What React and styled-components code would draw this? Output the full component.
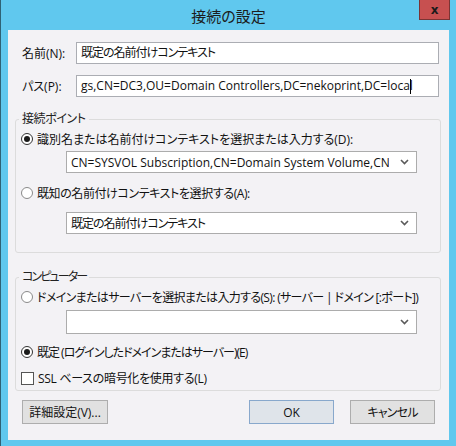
import React from "react";
import styled, { createGlobalStyle } from "styled-components";

const GlobalStyle = createGlobalStyle`
  html, body {
    margin: 0;
    padding: 0;
    background: #60c8ee;
  }
  body {
    font-family: "Open Sans", "Noto Sans CJK JP", sans-serif;
    font-size: 12px;
    color: #111;
    font-feature-settings: "palt";
  }
`;

const Window = styled.div`
  width: 456px;
  height: 446px;
  box-sizing: border-box;
  background: #60c8ee;
  border-left: 1px solid #2f6275;
  padding: 0 7px 6px 7px;
  display: flex;
  flex-direction: column;
`;

const TitleBar = styled.div`
  height: 30px;
  display: grid;
  grid-template-columns: 1fr auto 1fr;
  align-items: center;
`;

const Title = styled.div`
  grid-column: 2;
  font-size: 15px;
  color: #1c1c1c;
`;

const CloseButton = styled.div`
  grid-column: 3;
  justify-self: end;
  align-self: start;
  width: 31px;
  height: 20px;
  margin-right: -1px;
  box-sizing: border-box;
  background: #c75050;
  border: 1px solid #7a3434;
  border-top: none;
  display: flex;
  align-items: center;
  justify-content: center;
  font: bold 12px "DejaVu Sans", sans-serif;
  color: #1a1a1a;
`;

const Client = styled.div`
  flex: 1;
  background: #f3f2f5;
  padding: 12px 8px 0 7px;
  display: flex;
  flex-direction: column;
`;

const FieldRow = styled.div`
  display: grid;
  grid-template-columns: 54px 1fr;
  align-items: center;
  padding: 0 2px 0 7px;
  margin-top: ${(p) => p.$gap || 0}px;
`;

const TextBox = styled.div`
  height: 22px;
  box-sizing: border-box;
  border: 1px solid #abadb3;
  background: #fff;
  padding-left: 4px;
  line-height: 20px;
  white-space: nowrap;
  overflow: hidden;
  letter-spacing: ${(p) => p.$tight || 0}px;
`;

const Caret = styled.span`
  display: inline-block;
  width: 0;
  height: 15px;
  border-left: 1px solid #000;
  vertical-align: middle;
  margin-left: -3px;
`;

const Group = styled.fieldset`
  margin: ${(p) => p.$gap}px 0 0 0;
  padding: 3px 0 ${(p) => p.$bottom}px 0;
  border: 1px solid #dcdcdc;
  border-radius: 3px;
  min-width: 0;
`;

const Legend = styled.legend`
  margin-left: 3px;
  padding: 0 3px;
  line-height: 16px;
  color: #222;
  letter-spacing: ${(p) => p.$tight || 0}px;
`;

const OptionRow = styled.div`
  display: flex;
  align-items: center;
  gap: 4px;
  height: 18px;
  padding-left: 5px;
  margin-top: ${(p) => p.$gap || 0}px;
  white-space: pre;
  letter-spacing: ${(p) => p.$tight || 0}px;
`;

const Radio = styled.span`
  width: 12px;
  height: 12px;
  box-sizing: border-box;
  border-radius: 50%;
  border: 1px solid ${(p) => (p.$checked ? "#333" : "#8a8a8a")};
  background: #fff;
  display: flex;
  align-items: center;
  justify-content: center;
  flex: none;

  &::after {
    content: "";
    width: 6px;
    height: 6px;
    border-radius: 50%;
    background: ${(p) => (p.$checked ? "#1a1a1a" : "transparent")};
  }
`;

const Check = styled.span`
  width: 13px;
  height: 13px;
  box-sizing: border-box;
  border: 1px solid #555;
  background: #fff;
  flex: none;
`;

const Combo = styled.div`
  height: ${(p) => p.$h || 22}px;
  box-sizing: border-box;
  margin: ${(p) => p.$gap}px 23px 0 50px;
  border: 1px solid #acacac;
  background: #fff;
  display: flex;
  align-items: center;
  padding: 0 7px 0 4px;
`;

const ComboText = styled.span`
  flex: 1;
  overflow: hidden;
  white-space: nowrap;
  margin-right: 11px;
  letter-spacing: ${(p) => p.$tight || 0}px;
`;

const ButtonRow = styled.div`
  display: flex;
  align-items: center;
  margin-top: 9px;
  padding: 0 6px 0 7px;
`;

const Button = styled.div`
  width: ${(p) => p.$w}px;
  height: 24px;
  box-sizing: border-box;
  background: ${(p) => (p.$primary ? "#dfe4ea" : "#e1e1e1")};
  border: 1px solid ${(p) => (p.$primary ? "#88a8cc" : "#adadad")};
  display: flex;
  align-items: center;
  justify-content: center;
  margin-left: ${(p) => p.$gap || 0}px;
  letter-spacing: ${(p) => p.$tight || 0}px;
`;

const Spacer = styled.div`
  flex: 1;
`;

const Chevron = () => (
  <svg width="9" height="6" viewBox="0 0 9 6">
    <path d="M1 1 L4.5 4.5 L8 1" fill="none" stroke="#5a5a5a" strokeWidth="1.6" />
  </svg>
);

export default function App() {
  return (
    <>
      <GlobalStyle />
      <Window>
        <TitleBar>
          <Title>接続の設定</Title>
          <CloseButton>x</CloseButton>
        </TitleBar>
        <Client>
          <FieldRow>
            <span>名前(N):</span>
            <TextBox $tight={-1}>既定の名前付けコンテキスト</TextBox>
          </FieldRow>
          <FieldRow $gap={11}>
            <span>パス(P):</span>
            <TextBox>
              gs,CN=DC3,OU=Domain Controllers,DC=nekoprint,DC=local
              <Caret />
            </TextBox>
          </FieldRow>

          <Group $gap={14} $bottom={18}>
            <Legend $tight={-0.4}>接続ポイント</Legend>
            <OptionRow>
              <Radio $checked />
              識別名または名前付けコンテキストを選択または入力する(D):
            </OptionRow>
            <Combo $gap={3}>
              <ComboText>CN=SYSVOL Subscription,CN=Domain System Volume,CN=DFSR-LocalSettings</ComboText>
              <Chevron />
            </Combo>
            <OptionRow $gap={11} $tight={-0.4}>
              <Radio />
              既知の名前付けコンテキストを選択する(A):
            </OptionRow>
            <Combo $gap={10}>
              <ComboText $tight={-1}>既定の名前付けコンテキスト</ComboText>
              <Chevron />
            </Combo>
          </Group>

          <Group $gap={16} $bottom={3}>
            <Legend $tight={-1.9}>コンピューター</Legend>
            <OptionRow $tight={-0.65}>
              <Radio />
              ドメインまたはサーバーを選択または入力する(S): (サーバー | ドメイン [:ポート])
            </OptionRow>
            <Combo $gap={4} $h={24}>
              <ComboText />
              <Chevron />
            </Combo>
            <OptionRow $gap={9} $tight={-1}>
              <Radio $checked />
              既定 (ログインしたドメインまたはサーバー)(E)
            </OptionRow>
            <OptionRow $gap={8} $tight={-0.3}>
              <Check />
              SSL ベースの暗号化を使用する(L)
            </OptionRow>
          </Group>

          <ButtonRow>
            <Button $w={86}>詳細設定(V)...</Button>
            <Spacer />
            <Button $w={85} $primary>OK</Button>
            <Button $w={85} $gap={16} $tight={-0.8}>キャンセル</Button>
          </ButtonRow>
        </Client>
      </Window>
    </>
  );
}
